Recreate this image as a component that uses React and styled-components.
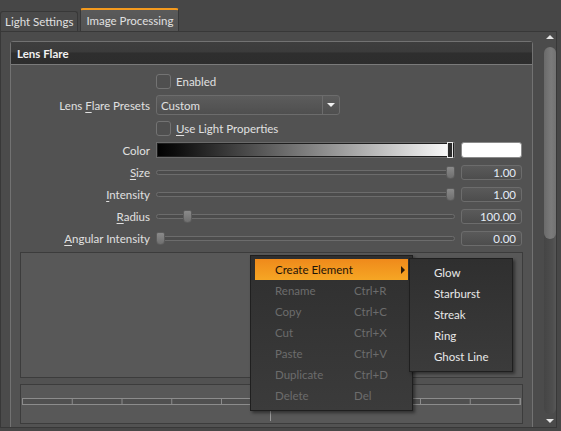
import React from 'react'
import styled, { createGlobalStyle } from 'styled-components'

const GlobalStyle = createGlobalStyle`
  html, body { margin: 0; padding: 0; background: #474747; }
  body {
    font-family: Lato, "Noto Sans", sans-serif;
    font-size: 11.5px;
    color: #e0e0e0;
  }
`

const Window = styled.div`
  position: relative;
  width: 561px;
  height: 431px;
  overflow: hidden;
  background: #474747;
  display: flex;
  flex-direction: column;
`

const TabBar = styled.div`
  height: 31px;
  display: flex;
  align-items: flex-end;
  gap: 2px;
`

const Tab = styled.div`
  box-sizing: border-box;
  height: ${p => (p.$active ? '23px' : '20px')};
  padding: 0 ${p => (p.$active ? '5px' : '4px')};
  display: flex;
  align-items: center;
  border: 1px solid #383838;
  border-bottom: none;
  border-top: ${p => (p.$active ? '2px solid #f39a1e' : '1px solid #383838')};
  border-radius: 3px 3px 0 0;
  background: ${p => (p.$active ? 'linear-gradient(#5a5a5a, #535353)' : '#4a4a4a')};
  color: #e0e0e0;
  white-space: nowrap;
`

const Pane = styled.div`
  box-sizing: border-box;
  width: 557px;
  height: 397px;
  border: 1px solid #383838;
  background: #4b4b4b;
  display: flex;
`

const ScrollArea = styled.div`
  flex: 1;
  overflow: hidden;
  padding: 9px 9px 0 9px;
`

const Scrollbar = styled.div`
  width: 13px;
  margin-left: 1px;
  display: flex;
  flex-direction: column;
  align-items: center;
`

const Arrow = styled.div`
  width: 0;
  height: 0;
  border-left: 4.5px solid transparent;
  border-right: 4.5px solid transparent;
  ${p => (p.$down ? 'border-top: 4px solid #e6e6e6;' : 'border-bottom: 4px solid #e6e6e6;')}
  margin: ${p => (p.$down ? '5px 0 4px' : '3px 0 8px')};
`

const Track = styled.div`
  flex: 1;
  width: 12px;
  border-radius: 6px;
  background: linear-gradient(to right, #454545, #4e4e4e 70%, #575757);
`

const Thumb = styled.div`
  height: 192px;
  border-radius: 6px;
  background: linear-gradient(to right, #6a6a6a, #7b7b7b 60%, #727272);
`

const Group = styled.div`
  box-sizing: border-box;
  border: 1px solid #727272;
  border-radius: 3px 3px 0 0;
  background: #525252;
  padding-bottom: 20px;
`

const GroupHeader = styled.div`
  height: 22px;
  display: flex;
  align-items: center;
  padding-left: 6px;
  border-bottom: 1px solid #7a7a7a;
  background: linear-gradient(#3e3e3e 0%, #3b3b3b 45%, #2e2e2e 50%, #2d2d2d 100%);
  color: #f2f2f2;
  font-weight: bold;
`

const Form = styled.div`
  display: grid;
  grid-template-columns: 139px 299px 61px;
  column-gap: 6px;
  row-gap: 6px;
  align-items: center;
  padding: 9px 10px 0 0;
`

const Label = styled.div`
  grid-column: 1;
  text-align: right;
  white-space: nowrap;
`

const Control = styled.div`
  grid-column: ${p => p.$span || 'auto'};
  display: flex;
  align-items: center;
`

const Mn = styled.span`
  text-decoration: underline;
  text-underline-offset: 2px;
`

const CheckRow = styled.div`
  grid-column: 2;
  display: flex;
  align-items: center;
  gap: 5px;
  height: 15px;
`

const Box = styled.div`
  box-sizing: border-box;
  width: 15px;
  height: 15px;
  border: 1px solid #737373;
  border-radius: 3px;
  background: #4f4f4f;
`

const Combo = styled.div`
  box-sizing: border-box;
  width: 184px;
  height: 20px;
  display: flex;
  border: 1px solid #6c6c6c;
  border-radius: 3px;
  background: linear-gradient(#5c5c5c, #4f4f4f);
`

const ComboText = styled.div`
  flex: 1;
  display: flex;
  align-items: center;
  padding-left: 4px;
`

const ComboButton = styled.div`
  width: 16px;
  border-left: 1px solid #6c6c6c;
  display: flex;
  align-items: center;
  justify-content: center;
  &::after {
    content: '';
    border-left: 4px solid transparent;
    border-right: 4px solid transparent;
    border-top: 4px solid #f0f0f0;
  }
`

const ColorBar = styled.div`
  position: relative;
  box-sizing: border-box;
  width: 299px;
  height: 16px;
  border: 1px solid #6a6a6a;
  box-shadow: inset 0 0 0 1px #1e1e1e;
  background: linear-gradient(to right, #000 0%, #0c0c0c 6%, #f6f6f6 97%, #fff 100%);
`

const ColorHandle = styled.div`
  position: absolute;
  right: 1px;
  top: -1px;
  bottom: -1px;
  width: 4px;
  border: 1px solid #e8e8e8;
  background: #2a2a2a;
`

const Swatch = styled.div`
  box-sizing: border-box;
  width: 61px;
  height: 16px;
  border: 1px solid #8a8a8a;
  border-radius: 3px;
  background: #ffffff;
`

const Slider = styled.div`
  position: relative;
  width: 299px;
  height: 16px;
  display: flex;
  align-items: center;
`

const Groove = styled.div`
  box-sizing: border-box;
  width: 100%;
  height: 5px;
  border: 1px solid #6c6c6c;
  border-radius: 3px;
  background: #4c4c4c;
`

const Handle = styled.div`
  position: absolute;
  top: 2px;
  box-sizing: border-box;
  width: 9px;
  height: 13px;
  border: 1px solid #5c5c5c;
  border-radius: 2px 2px 4px 4px;
  background: linear-gradient(#8a8a8a, #6f6f6f);
`

const ValueBox = styled.div`
  box-sizing: border-box;
  width: 61px;
  height: 15px;
  display: flex;
  align-items: center;
  justify-content: flex-end;
  padding-right: 5px;
  border: 1px solid #6c6c6c;
  border-radius: 3px;
  background: linear-gradient(#5a5a5a, #4d4d4d);
  color: #e4ecf6;
`

const Panel = styled.div`
  position: relative;
  box-sizing: border-box;
  height: ${p => p.$h}px;
  margin: 6px 9px 0 9px;
  border: 1px solid #3c3c3c;
  background: #585858;
`

const Ruler = styled.svg`
  display: block;
  margin: 13px 0 0 1px;
`

const Playhead = styled.div`
  position: absolute;
  left: 249px;
  top: 25px;
  width: 1px;
  height: 11px;
  background: #9a9a9a;
`

const Menu = styled.div`
  position: absolute;
  z-index: ${p => p.$z || 1};
  left: ${p => p.$x}px;
  top: ${p => p.$y}px;
  width: ${p => p.$w}px;
  box-sizing: border-box;
  padding: 3px 4px 4px 4px;
  border: 1px solid #1f1f1f;
  background: linear-gradient(#2f2f2f, #3b3b3b);
  box-shadow: 2px 2px 3px rgba(0, 0, 0, 0.45);
`

const Item = styled.div`
  height: 21px;
  display: flex;
  align-items: center;
  padding-left: ${p => p.$indent}px;
  color: ${p => (p.$hot ? '#1e1408' : p.$off ? '#6c6c6c' : '#e8e8e8')};
  background: ${p => (p.$hot ? 'linear-gradient(#ef8a1b, #f6a624)' : 'transparent')};
`

const ItemText = styled.span`
  width: 79px;
  white-space: nowrap;
`

const SubArrow = styled.span`
  margin-left: auto;
  margin-right: 3px;
  border-top: 4px solid transparent;
  border-bottom: 4px solid transparent;
  border-left: 4px solid #2a1a0a;
`

const Mnemonic = ({ text }) => {
  const i = text.indexOf('&')
  if (i < 0) return text
  return (
    <>
      {text.slice(0, i)}
      <Mn>{text[i + 1]}</Mn>
      {text.slice(i + 2)}
    </>
  )
}

const sliders = [
  { label: '&Size', pos: 1, value: '1.00' },
  { label: '&Intensity', pos: 1, value: '1.00' },
  { label: '&Radius', pos: 0.093, value: '100.00' },
  { label: '&Angular Intensity', pos: 0, value: '0.00' },
]

const menuItems = [
  ['Rename', 'Ctrl+R'],
  ['Copy', 'Ctrl+C'],
  ['Cut', 'Ctrl+X'],
  ['Paste', 'Ctrl+V'],
  ['Duplicate', 'Ctrl+D'],
  ['Delete', 'Del'],
]

const elements = ['Glow', 'Starburst', 'Streak', 'Ring', 'Ghost Line']

const ticks = Array.from({ length: 11 }, (_, i) => 0.5 + i * 49.75)

export default function App() {
  return (
    <Window>
      <GlobalStyle />
      <TabBar>
        <Tab>Light Settings</Tab>
        <Tab $active>Image Processing</Tab>
      </TabBar>
      <Pane>
        <ScrollArea>
          <Group>
            <GroupHeader>Lens Flare</GroupHeader>
            <Form>
              <CheckRow>
                <Box />
                Enabled
              </CheckRow>
              <Label><Mnemonic text="Lens &Flare Presets" /></Label>
              <Control $span="2 / 4">
                <Combo>
                  <ComboText>Custom</ComboText>
                  <ComboButton />
                </Combo>
              </Control>
              <CheckRow>
                <Box />
                <span><Mnemonic text="&Use Light Properties" /></span>
              </CheckRow>
              <Label>Color</Label>
              <Control>
                <ColorBar><ColorHandle /></ColorBar>
              </Control>
              <Control><Swatch /></Control>
              {sliders.map(s => (
                <React.Fragment key={s.label}>
                  <Label><Mnemonic text={s.label} /></Label>
                  <Control>
                    <Slider>
                      <Groove />
                      <Handle style={{ left: `${s.pos * 290}px` }} />
                    </Slider>
                  </Control>
                  <Control><ValueBox>{s.value}</ValueBox></Control>
                </React.Fragment>
              ))}
            </Form>
            <Panel $h={126} />
            <Panel $h={40}>
              <Ruler width="499" height="7" viewBox="0 0 499 7">
                <rect x="0.5" y="0.5" width="498" height="6" fill="#505050" stroke="#8c8c8c" />
                {ticks.map(x => (
                  <line key={x} x1={x} y1="0" x2={x} y2="7" stroke="#8c8c8c" />
                ))}
              </Ruler>
              <Playhead />
            </Panel>
          </Group>
        </ScrollArea>
        <Scrollbar>
          <Arrow />
          <Track><Thumb /></Track>
          <Arrow $down />
        </Scrollbar>
      </Pane>

      <Menu $x={250} $y={255} $w={163}>
        <Item $hot $indent={20}>
          <ItemText>Create Element</ItemText>
          <SubArrow />
        </Item>
        {menuItems.map(([name, key]) => (
          <Item key={name} $off $indent={20}>
            <ItemText>{name}</ItemText>
            {key}
          </Item>
        ))}
      </Menu>
      <Menu $x={409} $y={258} $w={104} $z={2}>
        {elements.map(e => (
          <Item key={e} $indent={20}>{e}</Item>
        ))}
      </Menu>
    </Window>
  )
}
